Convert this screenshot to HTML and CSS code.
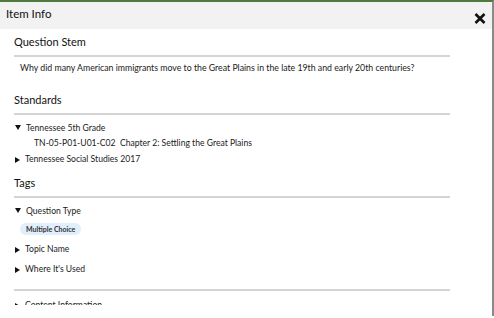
FILE: index.html
```html
<!DOCTYPE html>
<html lang="en">
<head>
  <meta charset="UTF-8" />
  <title>Item Info</title>
  <link rel="stylesheet" href="styles.css">
</head>
<body>
  <div class="modal">
    <div class="modal-header">
      <span class="modal-title">Item Info</span>
      <button class="close-btn" aria-label="Close">
        <svg width="12" height="11" viewBox="0 0 12 11">
          <path d="M1.5 1 L10.5 10 M10.5 1 L1.5 10" stroke="#111" stroke-width="2.6" stroke-linecap="butt"/>
        </svg>
      </button>
    </div>

    <div class="modal-body">
      <h2>Question Stem</h2>
      <p class="stem">Why did many American immigrants move to the Great Plains in the late 19th and early 20th centuries?</p>

      <h2>Standards</h2>
      <div class="tree-item open">Tennessee 5th Grade</div>
      <div class="tree-child">TN-05-P01-U01-C02&nbsp; Chapter 2: Settling the Great Plains</div>
      <div class="tree-item">Tennessee Social Studies 2017</div>

      <h2 class="tight">Tags</h2>
      <div class="tree-item open">Question Type</div>
      <div class="pill-row"><span class="pill">Multiple Choice</span></div>
      <div class="tree-item">Topic Name</div>
      <div class="tree-item">Where It's Used</div>

      <hr>
      <div class="tree-item">Content Information</div>
    </div>
  </div>
</body>
</html>
```

FILE: styles.css
```css
body {
  margin: 0;
  font-family: Lato, 'Open Sans', sans-serif;
  color: #1a1a1a;
  background: #fff;
  overflow: hidden;
  height: 318px;
}

.modal {
  border-top: 2px solid #4e7a3c;
  border-right: 2px solid #8a8a8a;
  height: 316px;
  box-sizing: border-box;
  overflow: hidden;
}

.modal-header {
  display: flex;
  justify-content: space-between;
  align-items: center;
  height: 27px;
  background: #f2f2f2;
  padding: 0 6px;
}

.modal-title {
  font-size: 11.5px;
  color: #111;
  margin-top: -5px;
}

.close-btn {
  border: none;
  background: none;
  padding: 0;
  margin: 5px 0 0 0;
  display: flex;
}

/* scroll area, clipped just under the last row */
.modal-body {
  padding: 0 42px 0 14px;
  height: 276px;
  overflow: hidden;
}

h2 {
  font-size: 11px;
  line-height: 16px;
  font-weight: normal;
  color: #111;
  margin: 5px 0 0;
  padding-bottom: 5px;
  border-bottom: 2px solid #d4d4d4;
}

.stem {
  font-size: 8.75px;
  line-height: 12px;
  margin: 5px 0 18px 6px;
}

.tree-item {
  font-size: 8.6px;
  margin-top: 8px;
  line-height: 12px;
}

h2 + .tree-item {
  margin-top: 7px;
}

.tree-child + .tree-item {
  margin-top: 4px;
}

.tree-item::before {
  content: "";
  display: inline-block;
  width: 0;
  height: 0;
  border-top: 3.5px solid transparent;
  border-bottom: 3.5px solid transparent;
  border-left: 5px solid #111;
  margin: 0 5px 0 1px;
  vertical-align: -0.5px;
}

.tree-item.open::before {
  border-left: 3.5px solid transparent;
  border-right: 3.5px solid transparent;
  border-top: 5px solid #111;
  border-bottom: 0;
  vertical-align: 1px;
}

.tree-child {
  font-size: 8.6px;
  line-height: 12px;
  margin: 3px 0 0 20px;
}

h2.tight {
  margin-top: 10px;
}

.pill-row {
  margin: 6px 0 0 6px;
  line-height: 12px;
}

.pill {
  display: inline-block;
  font-size: 7px;
  line-height: 8px;
  font-weight: bold;
  color: #333;
  background: #e1eefb;
  border-radius: 7px;
  padding: 2px 6px;
  vertical-align: top;
}

hr {
  border: none;
  border-top: 2px solid #d4d4d4;
  margin: 14px 0 0;
}
```
